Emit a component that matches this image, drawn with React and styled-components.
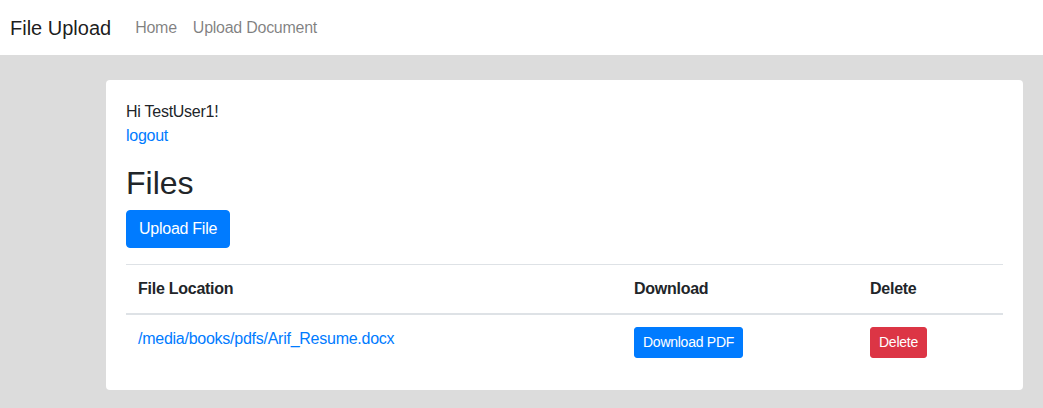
import React from 'react';
import styled, { createGlobalStyle } from 'styled-components';

const GlobalStyle = createGlobalStyle`
  * { box-sizing: border-box; }
  body {
    margin: 0;
    font-family: 'Liberation Sans', Arial, sans-serif;
    font-size: 16px;
    line-height: 1.5;
    letter-spacing: -0.016em;
    color: #212529;
    background: #dcdcdc;
  }
  button { letter-spacing: inherit; }
`;

const Page = styled.div`
  min-height: 408px;
  background: #dcdcdc;
`;

// === NAVBAR === //
const Navbar = styled.nav`
  height: 55px;
  background: #fff;
  display: flex;
  align-items: center;
  padding: 0 10px;
`;

const Brand = styled.a`
  font-size: 20px;
  line-height: 30px;
  letter-spacing: 0;
  color: rgba(0, 0, 0, 0.9);
  margin-right: 16px;
  text-decoration: none;
`;

const NavLink = styled.a`
  padding: 8px 8px;
  color: rgba(0, 0, 0, 0.5);
  text-decoration: none;
`;

// === CONTENT === //
const Main = styled.main`
  padding: 25px 20px 18px 106px;
`;

const Card = styled.div`
  background: #fff;
  border-radius: 4px;
  padding: 20px;
`;

const Greeting = styled.p`
  margin: 0 0 16px;
`;

const Link = styled.a`
  color: #007bff;
  text-decoration: none;
`;

const Heading = styled.h2`
  font-size: 32px;
  font-weight: 500;
  line-height: 1.2;
  letter-spacing: 0;
  margin: 0 0 8px;
`;

const Button = styled.button`
  font-family: inherit;
  border: 1px solid ${({ $variant }) => ($variant === 'danger' ? '#dc3545' : '#007bff')};
  background: ${({ $variant }) => ($variant === 'danger' ? '#dc3545' : '#007bff')};
  color: #fff;
  border-radius: ${({ $small }) => ($small ? '3px' : '4px')};
  font-size: ${({ $small }) => ($small ? '14px' : '16px')};
  line-height: 1.5;
  padding: ${({ $small }) => ($small ? '4px 8px' : '6px 12px')};
  cursor: pointer;
`;

const UploadRow = styled.div`
  margin-bottom: 16px;
  display: flex;
`;

const Table = styled.table`
  width: 100%;
  border-collapse: collapse;
  margin: 0;
`;

const Th = styled.th`
  text-align: left;
  font-weight: 700;
  padding: 12px;
  border-top: 1px solid #dee2e6;
  border-bottom: 2px solid #dee2e6;
  vertical-align: bottom;
  width: ${({ $w }) => $w || 'auto'};
`;

const Td = styled.td`
  padding: 12px;
  vertical-align: top;
`;

const files = [{ id: 1, path: '/media/books/pdfs/Arif_Resume.docx' }];

export default function App() {
  return (
    <Page>
      <GlobalStyle />
      <Navbar>
        <Brand href="#">File Upload</Brand>
        <NavLink href="#">Home</NavLink>
        <NavLink href="#">Upload Document</NavLink>
      </Navbar>
      <Main>
        <Card>
          <Greeting>
            Hi TestUser1!
            <br />
            <Link href="#">logout</Link>
          </Greeting>
          <Heading>Files</Heading>
          <UploadRow>
            <Button>Upload File</Button>
          </UploadRow>
          <Table>
            <thead>
              <tr>
                <Th $w="496px">File Location</Th>
                <Th $w="236px">Download</Th>
                <Th>Delete</Th>
              </tr>
            </thead>
            <tbody>
              {files.map((f) => (
                <tr key={f.id}>
                  <Td>
                    <Link href="#">{f.path}</Link>
                  </Td>
                  <Td>
                    <Button $small>Download PDF</Button>
                  </Td>
                  <Td>
                    <Button $small $variant="danger">Delete</Button>
                  </Td>
                </tr>
              ))}
            </tbody>
          </Table>
        </Card>
      </Main>
    </Page>
  );
}
